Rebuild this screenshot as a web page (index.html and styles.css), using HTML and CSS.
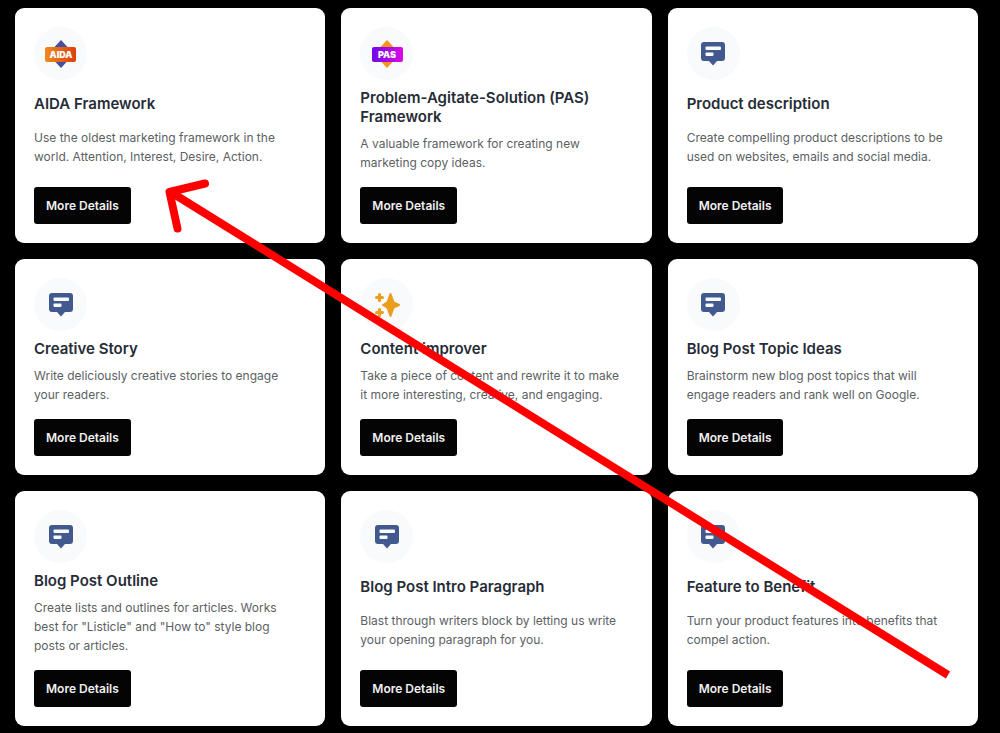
FILE: index.html
```
<!DOCTYPE html>
<html lang="en">
<head>
  <meta charset="UTF-8" />
  <meta name="viewport" content="width=device-width, initial-scale=1.0" />
  <title>Templates</title>
  <link rel="stylesheet" href="styles.css">
</head>
<body>
  <!-- Shared icon shapes -->
  <svg class="sprite" aria-hidden="true">
    <symbol id="icon-message" viewBox="0 0 26 24">
      <path fill="#41598f" d="M4 0h18a3 3 0 0 1 3 3v13a3 3 0 0 1-3 3h-5l-4 4.500-4-4.500H4a3 3 0 0 1-3-3V3a3 3 0 0 1 3-3z"/>
      <rect x="5.500" y="4.500" width="15.500" height="3.500" rx="1" fill="#f8fafc"/>
      <rect x="5.500" y="10.500" width="8" height="3.500" rx="1" fill="#f8fafc"/>
    </symbol>
    <symbol id="icon-sparkles" viewBox="0 0 26 26">
      <path fill="#eb9d1c" stroke="#eb9d1c" stroke-width="2" stroke-linejoin="round" d="M16.500 2l3 8.300L25 13l-5.500 2.700-3 8.300-3-8.300L9 13l4.500-2.700z"/>
      <path fill="none" stroke="#eb9d1c" stroke-width="3" stroke-linecap="round" d="M5.500 2.500v6M2.500 5.500h6M5.500 17.500v6M2.500 20.500h6"/>
    </symbol>
  </svg>

  <main class="page">
    <div class="grid">
      <article class="card">
        <div class="icon">
          <svg width="32" height="28" viewBox="0 0 32 28" role="img" aria-label="AIDA">
            <defs>
              <linearGradient id="aida-fill"><stop offset="0" stop-color="#f08a1d"/><stop offset="1" stop-color="#dc3f12"/></linearGradient>
            </defs>
            <path d="M16 0l13 14-13 14L3 14z" fill="#4650a0"/>
            <rect x="0" y="7" width="31" height="15" rx="2" fill="url(#aida-fill)"/>
            <text class="badge-text" x="16" y="18" text-anchor="middle">AIDA</text>
          </svg>
        </div>
        <h2>AIDA Framework</h2>
        <p>Use the oldest marketing framework in the world. Attention, Interest, Desire, Action.</p>
        <button type="button">More Details</button>
      </article>

      <article class="card">
        <div class="icon">
          <svg width="32" height="28" viewBox="0 0 32 28" role="img" aria-label="PAS">
            <defs>
              <linearGradient id="pas-fill"><stop offset="0" stop-color="#7208e8"/><stop offset="1" stop-color="#dc08e4"/></linearGradient>
            </defs>
            <path d="M16 0l13 14-13 14L3 14z" fill="#f7931e"/>
            <rect x="1" y="7" width="31" height="15" rx="2" fill="url(#pas-fill)"/>
            <text class="badge-text" x="16" y="18" text-anchor="middle">PAS</text>
          </svg>
        </div>
        <h2>Problem-Agitate-Solution (PAS) Framework</h2>
        <p>A valuable framework for creating new marketing copy ideas.</p>
        <button type="button">More Details</button>
      </article>

      <article class="card">
        <div class="icon"><svg width="26" height="24"><use href="#icon-message"/></svg></div>
        <h2>Product description</h2>
        <p>Create compelling product descriptions to be used on websites, emails and social media.</p>
        <button type="button">More Details</button>
      </article>

      <article class="card">
        <div class="icon"><svg width="26" height="24"><use href="#icon-message"/></svg></div>
        <h2>Creative Story</h2>
        <p>Write deliciously creative stories to engage your readers.</p>
        <button type="button">More Details</button>
      </article>

      <article class="card">
        <div class="icon"><svg width="26" height="26"><use href="#icon-sparkles"/></svg></div>
        <h2>Content improver</h2>
        <p>Take a piece of content and rewrite it to make it more interesting, creative, and engaging.</p>
        <button type="button">More Details</button>
      </article>

      <article class="card">
        <div class="icon"><svg width="26" height="24"><use href="#icon-message"/></svg></div>
        <h2>Blog Post Topic Ideas</h2>
        <p>Brainstorm new blog post topics that will engage readers and rank well on Google.</p>
        <button type="button">More Details</button>
      </article>

      <article class="card">
        <div class="icon"><svg width="26" height="24"><use href="#icon-message"/></svg></div>
        <h2>Blog Post Outline</h2>
        <p>Create lists and outlines for articles. Works best for "Listicle" and "How to" style blog posts or articles.</p>
        <button type="button">More Details</button>
      </article>

      <article class="card">
        <div class="icon"><svg width="26" height="24"><use href="#icon-message"/></svg></div>
        <h2>Blog Post Intro Paragraph</h2>
        <p>Blast through writers block by letting us write your opening paragraph for you.</p>
        <button type="button">More Details</button>
      </article>

      <article class="card">
        <div class="icon"><svg width="26" height="24"><use href="#icon-message"/></svg></div>
        <h2>Feature to Benefit</h2>
        <p>Turn your product features into benefits that compel action.</p>
        <button type="button">More Details</button>
      </article>
    </div>

    <!-- Arrow pointing at the first card -->
    <svg class="arrow" viewBox="0 0 1000 733" aria-hidden="true">
      <path d="M169 191L948 675"/>
      <path class="arrow-head" d="M205 183.500L169.500 192L177.500 228.500"/>
    </svg>
  </main>
</body>
</html>
```
FILE: styles.css
```
body {
  margin: 0;
  background-color: #000;
  font-family: Inter, 'Liberation Sans', sans-serif;
}
.sprite {
  position: absolute;
  width: 0;
  height: 0;
}
.page {
  position: relative;
  padding: 8px 22px 7px 15px;
}
.grid {
  display: grid;
  grid-template-columns: repeat(3, 1fr);
  gap: 16px;
}
.card {
  display: flex;
  flex-direction: column;
  justify-content: space-between;
  align-items: flex-start;
  box-sizing: border-box;
  padding: 19px;
  background-color: #fff;
  border-radius: 9px;
}
.icon {
  display: flex;
  align-items: center;
  justify-content: center;
  width: 53px;
  height: 53px;
  border-radius: 50%;
  background-color: #f8fafc;
}
.badge-text {
  font-size: 9px;
  font-weight: 900;
  fill: #fff;
}
h2 {
  margin: 8px 0;
  font-size: 15px;
  font-weight: 600;
  line-height: 19px;
  color: #262c37;
}
p {
  margin: 0 0 15px;
  padding-right: 8px;
  font-size: 12px;
  line-height: 19px;
  color: #5c5f64;
}
button {
  height: 37px;
  padding: 0 12px;
  border: none;
  border-radius: 3px;
  background-color: #040404;
  color: #f0f0f0;
  font-family: inherit;
  font-size: 12px;
  font-weight: 600;
  cursor: pointer;
}
/* Drawn over the cards, clicks pass through to the buttons */
.arrow {
  position: absolute;
  top: 0;
  left: 0;
  width: 100%;
  fill: none;
  stroke: #f00;
  stroke-width: 8px;
  pointer-events: none;
}
.arrow-head {
  stroke-linecap: round;
  stroke-linejoin: round;
}
```
